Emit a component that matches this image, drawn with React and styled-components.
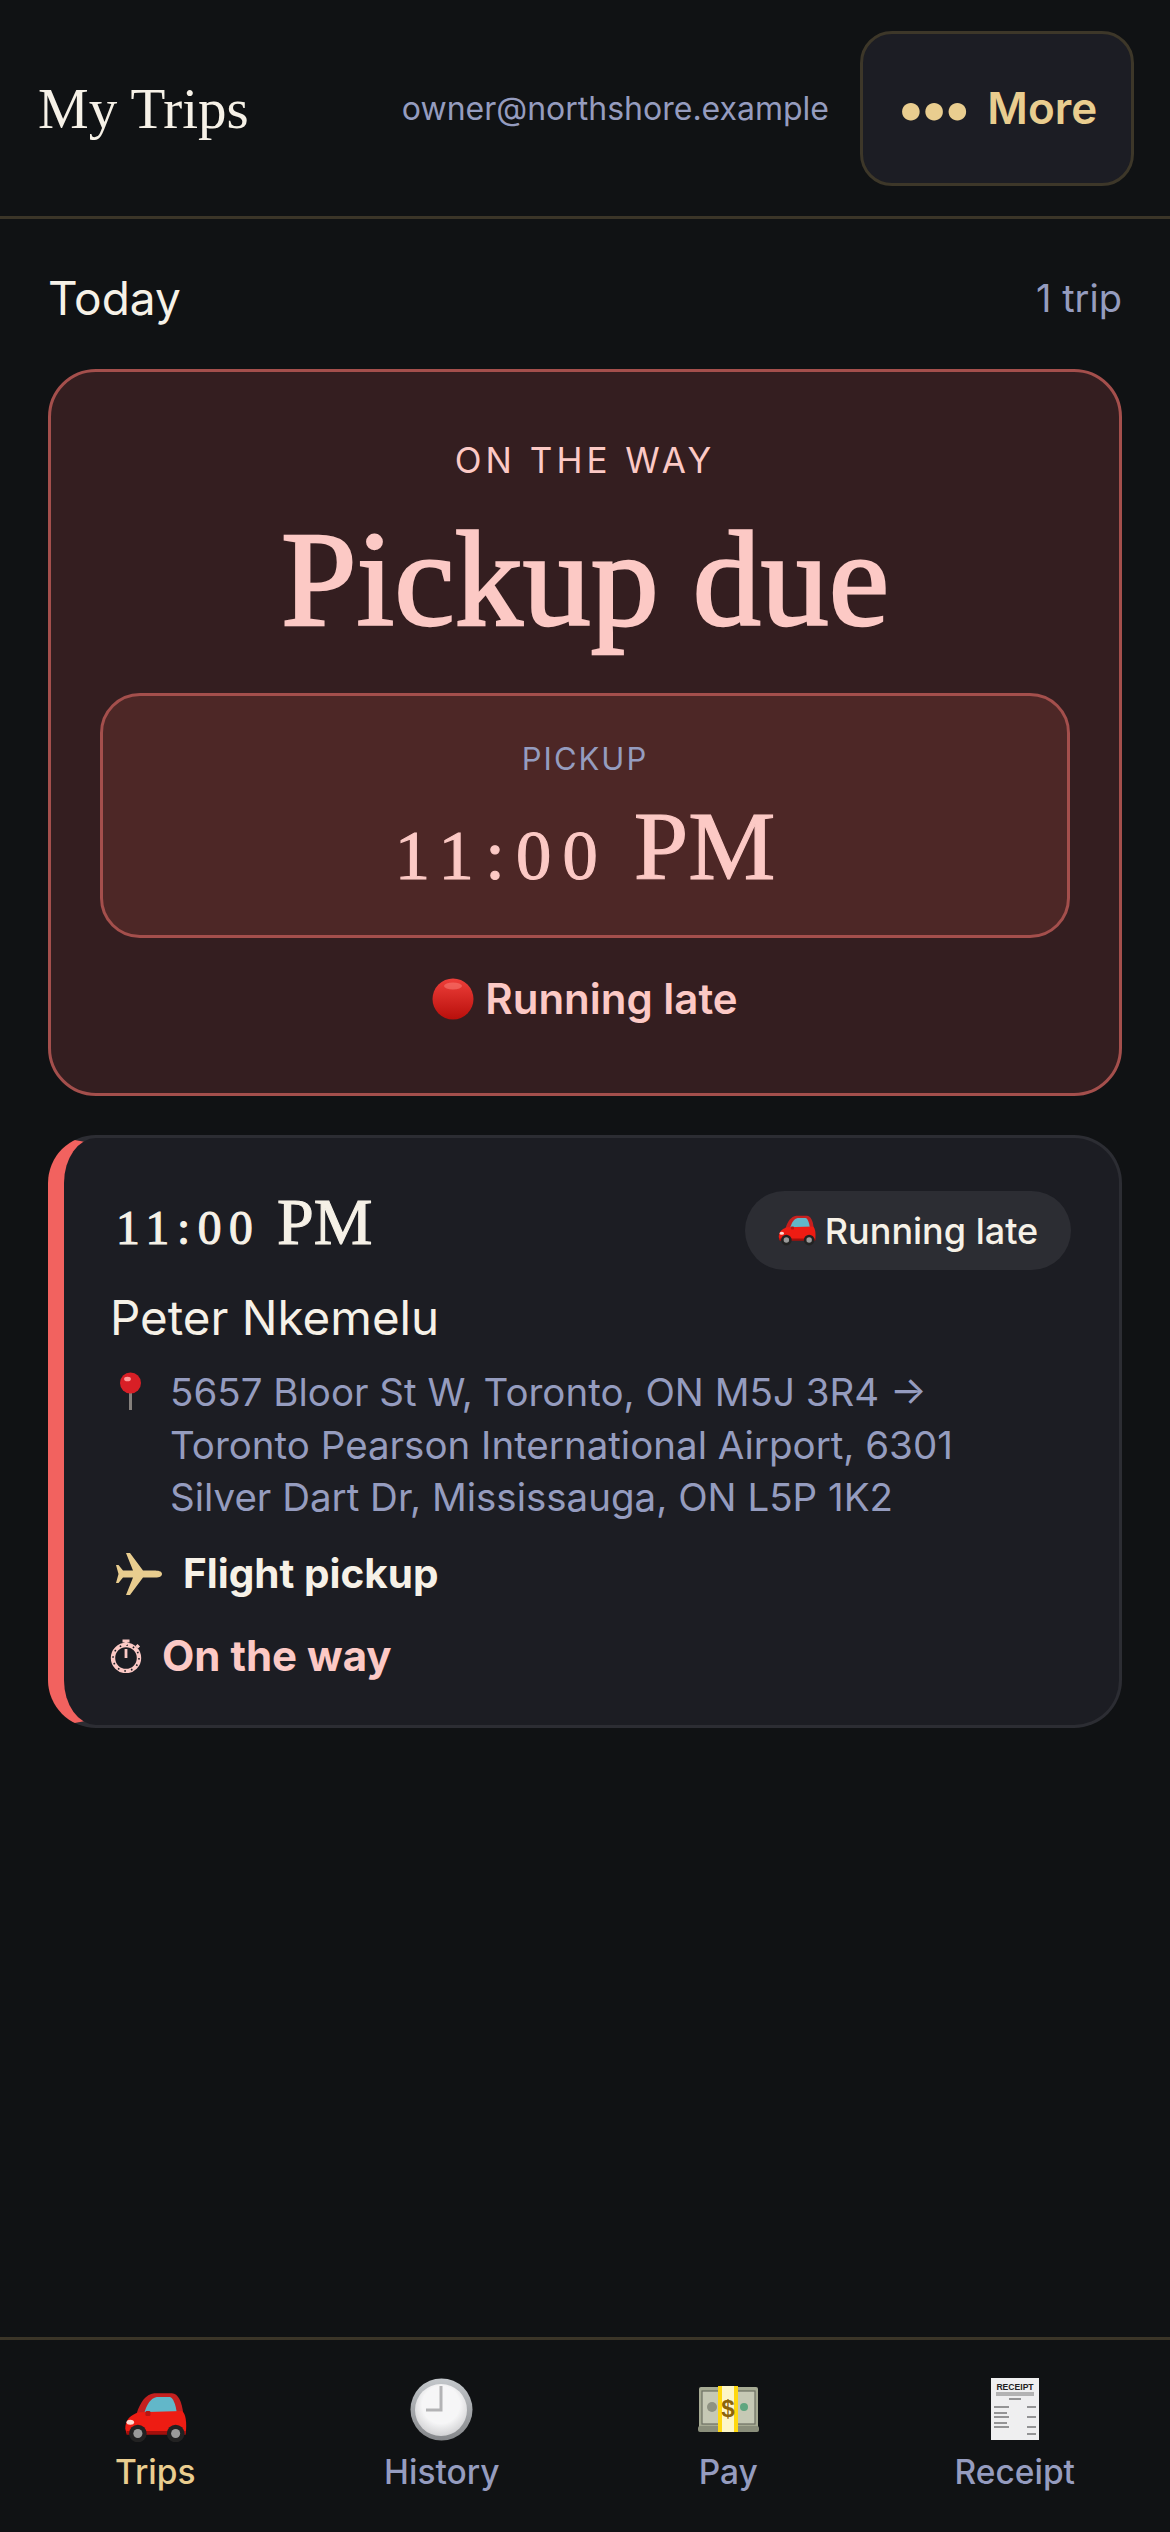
import styled, { createGlobalStyle } from "styled-components";

const GlobalStyle = createGlobalStyle`
  html, body { margin: 0; padding: 0; background: #101214; }
  * { box-sizing: border-box; }
`;

const sans = `"Inter", "Liberation Sans", sans-serif`;
const serif = `"Liberation Serif", serif`;

const Page = styled.div`
  min-height: 100vh;
  display: flex;
  flex-direction: column;
  background: #101214;
  font-family: ${sans};
  color: #f6f1e7;
`;

const Header = styled.header`
  height: 219px;
  padding: 0 36px 0 38px;
  display: flex;
  align-items: center;
  border-bottom: 3px solid #3b3528;
`;

const Brand = styled.h1`
  margin: 0 auto 0 0;
  font: 400 57px ${serif};
  color: #f6f1e7;
`;

const Email = styled.span`
  font-size: 32px;
  color: #959cbf;
  margin-right: 31px;
`;

const MoreButton = styled.button`
  width: 274px;
  height: 155px;
  display: flex;
  align-items: center;
  justify-content: center;
  gap: 21px;
  background: #1c1d24;
  border: 3px solid #3d3729;
  border-radius: 32px;
  color: #e9cd8f;
  font: 600 44px ${sans};
`;

const MoreDots = styled.span`
  font-size: 56px;
  line-height: 1;
  letter-spacing: -5px;
`;

const Main = styled.main`
  flex: 1;
  padding: 49px 48px 0;
`;

const SectionHead = styled.div`
  display: flex;
  justify-content: space-between;
  align-items: center;
  height: 60px;
  margin-bottom: 41px;
`;

const SectionTitle = styled.h2`
  margin: 0;
  font-size: 46px;
  font-weight: 400;
`;

const SectionCount = styled.span`
  font-size: 38px;
  color: #959cbf;
`;

const AlertCard = styled.section`
  height: 727px;
  padding: 67px 49px 0;
  display: flex;
  flex-direction: column;
  align-items: center;
  background: #341e20;
  border: 3px solid #a44f4c;
  border-radius: 48px;
  color: #fcc9c5;
`;

const Eyebrow = styled.div`
  font-size: 35px;
  line-height: 42px;
  letter-spacing: 4px;
`;

const BigTitle = styled.div`
  margin-top: 24px;
  font: 400 136px/148px ${serif};
  -webkit-text-stroke: 2.4px #fcc9c5;
`;

const TimeBox = styled.div`
  width: 100%;
  height: 245px;
  margin-top: 40px;
  padding-top: 44px;
  display: flex;
  flex-direction: column;
  align-items: center;
  background: #4d2726;
  border: 3px solid #a44f4c;
  border-radius: 40px;
`;

const TimeLabel = styled.div`
  font-size: 31px;
  line-height: 38px;
  letter-spacing: 2px;
  color: #959cbf;
`;

const TimeValue = styled.div`
  margin-top: 15px;
  font: 400 ${(p) => p.$size}px/1.1 ${serif};
  -webkit-text-stroke: 1.1px currentColor;
  white-space: nowrap;
`;

const Digits = styled.span`
  font-size: 0.72em;
  letter-spacing: 0.16em;
`;

const LateLine = styled.div`
  margin-top: 37px;
  display: flex;
  align-items: center;
  gap: 11px;
  font-size: 42px;
  font-weight: 600;
  line-height: 48px;
`;

const TripCard = styled.article`
  height: 593px;
  margin-top: 39px;
  padding: 53px 48px 0 46px;
  background: #1c1d23;
  border: 3px solid #2c2d33;
  border-left: 16px solid #f2625f;
  border-radius: 48px;
`;

const TripTop = styled.div`
  display: flex;
  justify-content: space-between;
  align-items: flex-start;
`;

const TripTime = styled(TimeValue)`
  margin: -5px 0 0 6px;
`;

const StatusPill = styled.div`
  width: 326px;
  height: 79px;
  display: flex;
  align-items: center;
  justify-content: center;
  gap: 9px;
  border-radius: 40px;
  background: #2c2d33;
  font-size: 36px;
  font-weight: 500;
`;

const PassengerName = styled.div`
  margin-top: 20px;
  font-size: 47.5px;
  line-height: 56px;
  font-weight: 400;
`;

const IconRow = styled.div`
  display: flex;
  align-items: ${(p) => p.$align || "center"};
  gap: ${(p) => p.$gap}px;
  margin-top: ${(p) => p.$top}px;
  padding-left: ${(p) => p.$indent || 0}px;
`;

const Address = styled.div`
  width: 830px;
  font-size: 38.5px;
  line-height: 52.5px;
  color: #959cbf;
`;

const Strong = styled.div`
  font-size: ${(p) => p.$size}px;
  line-height: 50px;
  font-weight: 700;
  color: ${(p) => p.$color};
`;

const Nav = styled.nav`
  height: 195px;
  padding: 36px 12px 0;
  display: grid;
  grid-template-columns: repeat(4, 1fr);
  border-top: 3px solid #3b3528;
`;

const NavItem = styled.div`
  display: flex;
  flex-direction: column;
  align-items: center;
  color: ${(p) => (p.$active ? "#e9cd8f" : "#959cbf")};
  font-size: 33.5px;
  font-weight: 500;
  line-height: 40px;
`;

const NavIcon = styled.div`
  height: 66px;
  display: flex;
  align-items: ${(p) => (p.$low ? "flex-end" : "center")};
  justify-content: center;
  margin-bottom: 10px;
`;

const PinIcon = styled.svg`
  margin-top: 6px;
  flex: none;
`;

const Car = ({ size }) => (
  <svg width={size} height={size * 0.8} viewBox="0 0 50 40">
    <path d="M10 17 C13 8 17 2 24 1 L38 1 C43 1 46 8 47 17 Z" fill="#c5201f" />
    <path d="M16 17 C18 10 21 5 26 4 L36 4 C39 4 41 10 42 17 Z" fill="#62b7c9" />
    <path d="M1 29 C1 22 5 18 12 16 L46 15 C49 17 50 24 49 33 L2 33 Z" fill="#ee1c13" />
    <path d="M2 31 L49 31 L49 34 L2 34 Z" fill="#a30f0c" />
    <ellipse cx="5" cy="24" rx="3" ry="2" fill="#ffd9d0" />
    <rect x="17" y="15" width="4" height="4" rx="1" fill="#b81512" />
    <circle cx="11" cy="33" r="7" fill="#222" />
    <circle cx="11" cy="33" r="3.6" fill="#9a9a9a" />
    <circle cx="41" cy="33" r="7" fill="#222" />
    <circle cx="41" cy="33" r="3.6" fill="#9a9a9a" />
  </svg>
);

const Clock = () => (
  <svg width="63" height="63" viewBox="0 0 63 63">
    <defs>
      <linearGradient id="rim" x1="0" y1="0" x2="0" y2="1">
        <stop offset="0" stopColor="#c4c8cc" />
        <stop offset="1" stopColor="#85878a" />
      </linearGradient>
      <radialGradient id="face" cx="0.5" cy="0.4" r="0.6">
        <stop offset="0.6" stopColor="#f6f6f7" />
        <stop offset="1" stopColor="#d2d2d4" />
      </radialGradient>
    </defs>
    <circle cx="31.5" cy="31.5" r="31" fill="url(#rim)" />
    <circle cx="31" cy="32" r="26" fill="url(#face)" />
    <path d="M31 8 V32 H16" fill="none" stroke="#b3b3b5" strokeWidth="3" />
  </svg>
);

const Money = () => (
  <svg width="61" height="47" viewBox="0 0 61 47">
    <rect x="1" y="1" width="59" height="42" rx="2" fill="#a7ab94" />
    <rect x="0" y="40" width="61" height="6" rx="2" fill="#8a8e7b" />
    <rect x="4" y="5" width="53" height="33" fill="#c6c9b5" stroke="#6d7163" strokeWidth="1.2" />
    <circle cx="14" cy="21" r="5" fill="#8e9282" />
    <circle cx="46" cy="21" r="4" fill="#5fa67f" />
    <rect x="20" y="0" width="20" height="46" fill="#ffd80f" />
    <rect x="24" y="0" width="12" height="46" fill="#fdf6c7" />
    <text x="30" y="31" textAnchor="middle" fontFamily="Liberation Sans" fontSize="24" fontWeight="700" fill="#8c6409">$</text>
  </svg>
);

const Receipt = () => (
  <svg width="48" height="62" viewBox="0 0 48 62">
    <rect width="48" height="62" fill="#efeff0" />
    <text x="24" y="12" textAnchor="middle" fontFamily="Liberation Sans" fontSize="8.6" fontWeight="700" fill="#222">RECEIPT</text>
    <path d="M5 15 H43 M5 17 H43" stroke="#777" strokeWidth="1" />
    <path d="M18 21 H30 M3 29 H18 M36 29 H45 M3 35 H16 M3 39 H18 M36 39 H45 M3 45 H16 M3 49 H18 M36 49 H45 M36 56 H45" stroke="#777" strokeWidth="1.4" />
  </svg>
);

const Pin = () => (
  <PinIcon width="25" height="38" viewBox="0 0 25 38">
    <rect x="11" y="17" width="3" height="21" fill="#85807c" />
    <circle cx="12.5" cy="11" r="10.5" fill="#d81f26" />
    <ellipse cx="9.5" cy="7" rx="3.4" ry="2.3" fill="#ff9a9a" />
  </PinIcon>
);

const RedDot = () => (
  <svg width="42" height="42" viewBox="0 0 42 42">
    <defs>
      <linearGradient id="dot" x1="0" y1="0" x2="0" y2="1">
        <stop offset="0" stopColor="#ee3f3a" />
        <stop offset="1" stopColor="#b80f0b" />
      </linearGradient>
    </defs>
    <circle cx="21" cy="21" r="20.5" fill="url(#dot)" />
    <ellipse cx="21" cy="8" rx="9" ry="3.5" fill="#ff8d86" opacity="0.45" />
  </svg>
);

const Plane = () => (
  <svg width="46" height="42" viewBox="0 0 46 42">
    <path
      fill="#e9cd8f"
      d="M46 21 C46 18 42 17.5 38 17.5 L27 17.5 L14 0 L10 0 L17 17.5 L7 17.5 L2.5 12 L0 12 L2.5 21 L0 30 L2.5 30 L7 24.5 L17 24.5 L10 42 L14 42 L27 24.5 L38 24.5 C42 24.5 46 24 46 21 Z"
    />
  </svg>
);

const Stopwatch = () => (
  <svg width="32" height="34" viewBox="0 0 32 34" fill="none" stroke="#fcc9c5">
    <circle cx="16" cy="19" r="13" strokeWidth="4.4" />
    <circle cx="16" cy="19" r="13" stroke="#1c1d23" strokeWidth="1.6" strokeDasharray="1.6 5.2" />
    <path d="M16 10 V19" strokeWidth="2.8" />
    <path d="M12.5 2 H19.5 M16 2 V6 M26.5 6 L29 8.5" strokeWidth="3" />
  </svg>
);

const tabs = [
  { label: "Trips", icon: <Car size={63} />, active: true, low: true },
  { label: "History", icon: <Clock /> },
  { label: "Pay", icon: <Money /> },
  { label: "Receipt", icon: <Receipt /> },
];

const App = () => {
  return (
    <Page>
      <GlobalStyle />
      <Header>
        <Brand>My Trips</Brand>
        <Email>owner@northshore.example</Email>
        <MoreButton>
          <MoreDots>•••</MoreDots>
          <span>More</span>
        </MoreButton>
      </Header>

      <Main>
        <SectionHead>
          <SectionTitle>Today</SectionTitle>
          <SectionCount>1 trip</SectionCount>
        </SectionHead>

        <AlertCard>
          <Eyebrow>ON THE WAY</Eyebrow>
          <BigTitle>Pickup due</BigTitle>
          <TimeBox>
            <TimeLabel>PICKUP</TimeLabel>
            <TimeValue $size={98}>
              <Digits>11:00</Digits> PM
            </TimeValue>
          </TimeBox>
          <LateLine>
            <RedDot />
            Running late
          </LateLine>
        </AlertCard>

        <TripCard>
          <TripTop>
            <TripTime $size={66}>
              <Digits>11:00</Digits> PM
            </TripTime>
            <StatusPill>
              <Car size={38} />
              Running late
            </StatusPill>
          </TripTop>
          <PassengerName>Peter Nkemelu</PassengerName>
          <IconRow $align="flex-start" $gap={27} $top={20} $indent={8}>
            <Pin />
            <Address>
              5657 Bloor St W, Toronto, ON M5J 3R4 →
              <br />
              Toronto Pearson International Airport, 6301
              <br />
              Silver Dart Dr, Mississauga, ON L5P 1K2
            </Address>
          </IconRow>
          <IconRow $gap={21} $top={25} $indent={6}>
            <Plane />
            <Strong $size={40.5} $color="#f6f1e7">Flight pickup</Strong>
          </IconRow>
          <IconRow $gap={20} $top={32}>
            <Stopwatch />
            <Strong $size={42} $color="#fcc9c5">On the way</Strong>
          </IconRow>
        </TripCard>
      </Main>

      <Nav>
        {tabs.map((tab) => (
          <NavItem key={tab.label} $active={tab.active}>
            <NavIcon $low={tab.low}>{tab.icon}</NavIcon>
            {tab.label}
          </NavItem>
        ))}
      </Nav>
    </Page>
  );
};

export default App;
